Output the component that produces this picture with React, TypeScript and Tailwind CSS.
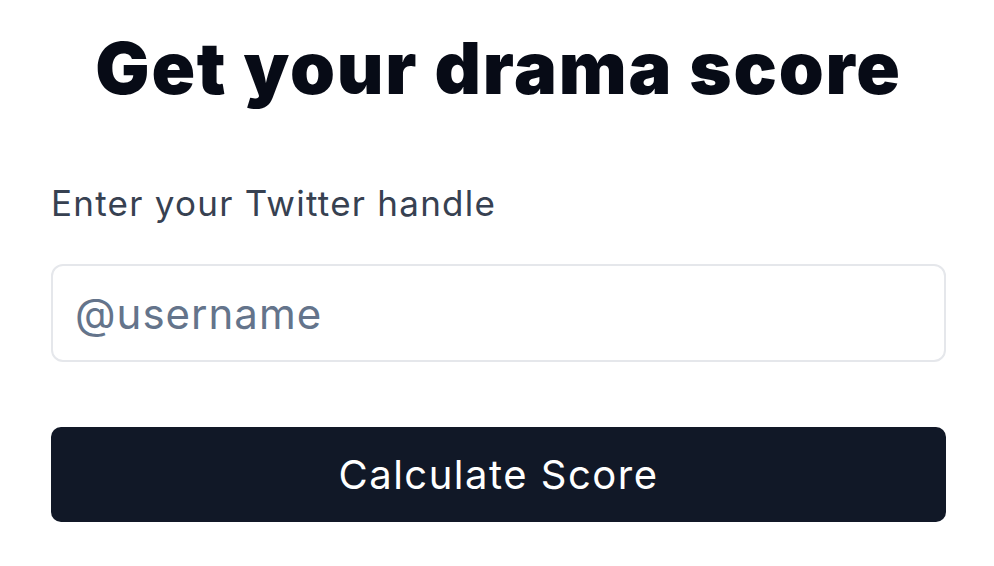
export default function App() {
  return (
    <div className="min-h-screen bg-white pl-[51px] pr-[48px] pt-[20px] font-['Inter',sans-serif]">
      {/* Title */}
      <h1 className="text-center text-[72px] font-black leading-[96px] tracking-[1.8px] text-[#070b16]">
        Get your drama score
      </h1>

      {/* Form */}
      <div className="mt-[63px] flex flex-col">
        <label className="text-[35px] leading-[48px] tracking-[1.25px] text-[#374151]">Enter your Twitter handle</label>
        <input
          type="text"
          placeholder="@username"
          className="mt-[37px] h-[98px] w-full rounded-[12px] border-2 border-[#e5e7eb] px-[22px] text-[42px] tracking-[1px] outline-none placeholder:text-[#64748b]"
        />
        <button className="mt-[65px] h-[95px] w-full rounded-[10px] bg-[#111827] text-[40px] tracking-[1.5px] text-white">
          Calculate Score
        </button>
      </div>
    </div>
  )
}
